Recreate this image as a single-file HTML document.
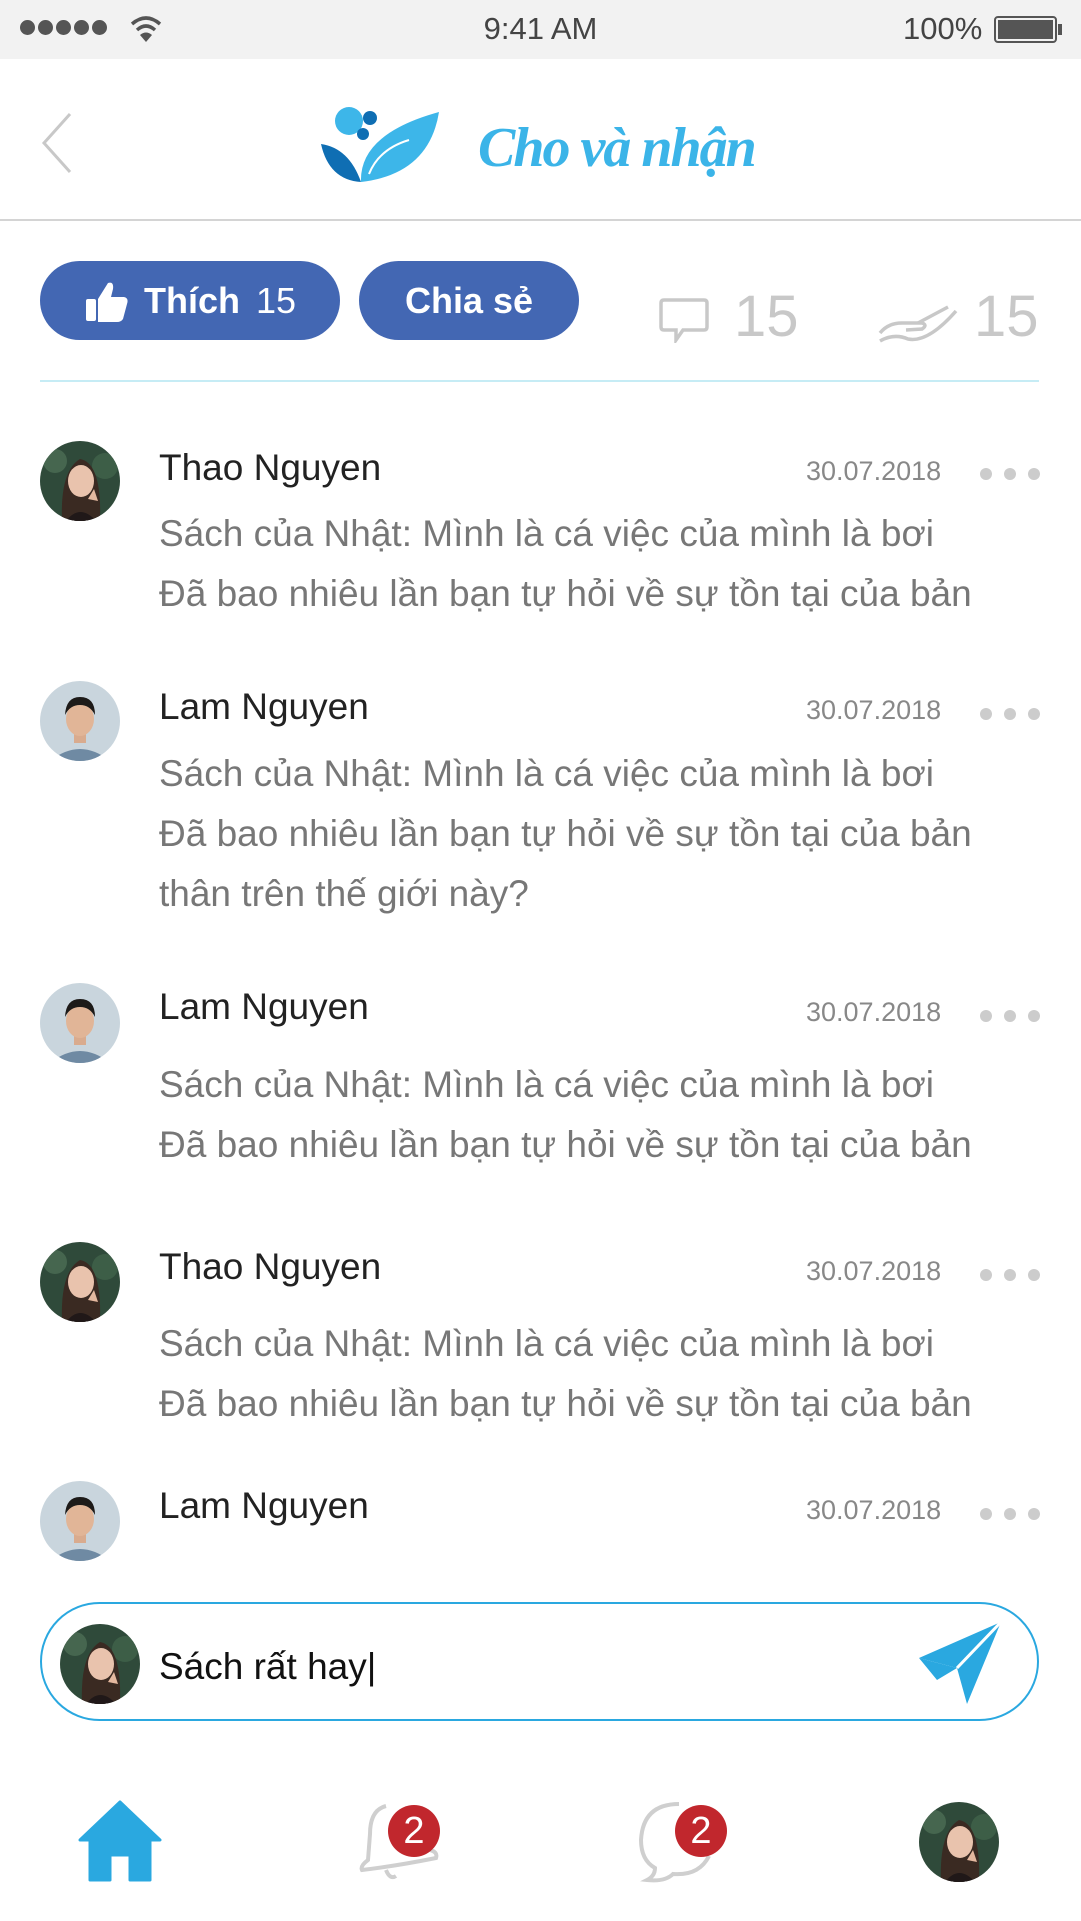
<!DOCTYPE html>
<html><head><meta charset="utf-8">
<style>
*{margin:0;padding:0;box-sizing:border-box}
body{width:1081px;height:1921px;background:#fff;font-family:"Liberation Sans",sans-serif;position:relative;overflow:hidden}
.abs{position:absolute}
.status{left:0;top:0;width:1081px;height:59px;background:#f2f2f2}
.name{font-size:37px;color:#222;left:159px}
.date{font-size:27px;color:#888;left:806px}
.txt{font-size:37px;color:#777;left:159px;white-space:nowrap}
.dots{left:980px;width:60px;height:12px}
.dots i{position:absolute;top:0;width:12px;height:12px;border-radius:50%;background:#ccc}
.btn{background:#4367b3;color:#fff;border-radius:40px;font-weight:bold;font-size:36px;display:flex;align-items:center;justify-content:center}
</style></head><body>
<svg width="0" height="0" style="position:absolute">
<defs>
<clipPath id="cc"><circle cx="40" cy="40" r="40"/></clipPath>
<g id="woman"><g clip-path="url(#cc)"><rect width="80" height="80" fill="#2f4a3a"/><circle cx="15" cy="20" r="12" fill="#46664f"/><circle cx="65" cy="25" r="13" fill="#3d5e47"/><path d="M22 80 Q20 30 40 18 Q62 22 60 80Z" fill="#3a2a22"/><ellipse cx="41" cy="40" rx="13" ry="16" fill="#e9c3ad"/><path d="M26 80 Q40 62 56 80Z" fill="#201818"/><path d="M48 58 l6 -10 4 12z" fill="#e4b89f"/></g></g>
<g id="man"><g clip-path="url(#cc)"><rect width="80" height="80" fill="#c9d5dd"/><path d="M10 80 Q40 56 70 80Z" fill="#6f8aa3"/><rect x="34" y="50" width="12" height="12" fill="#d9ab8e"/><ellipse cx="40" cy="38" rx="14" ry="17" fill="#e1b597"/><path d="M25 34 Q26 16 40 16 Q55 16 55 34 Q50 24 40 24 Q30 24 25 34Z" fill="#1d1a18"/></g></g>
</defs></svg>

<div class="abs status"></div>
<div class="abs" style="left:20px;top:20px;display:flex;gap:3px"><i style="width:15px;height:15px;border-radius:50%;background:#555;display:block"></i><i style="width:15px;height:15px;border-radius:50%;background:#555;display:block"></i><i style="width:15px;height:15px;border-radius:50%;background:#555;display:block"></i><i style="width:15px;height:15px;border-radius:50%;background:#555;display:block"></i><i style="width:15px;height:15px;border-radius:50%;background:#555;display:block"></i></div>
<svg class="abs" style="left:130px;top:14px" width="32" height="30" viewBox="0 0 32 30"><path d="M2 10 Q16 -2 30 10" stroke="#555" stroke-width="3.5" fill="none"/><path d="M7 16 Q16 8 25 16" stroke="#555" stroke-width="3.5" fill="none"/><path d="M16 28 L10 21 Q16 16 22 21Z" fill="#555"/></svg>
<div class="abs" style="left:0;width:1081px;top:11px;text-align:center;font-size:31px;color:#444">9:41 AM</div>
<div class="abs" style="left:903px;top:11px;font-size:31px;color:#444">100%</div>
<div class="abs" style="left:994px;top:16px;width:63px;height:27px;border:2px solid #555;border-radius:4px;padding:2px"><div style="background:#555;width:100%;height:100%"></div></div>
<div class="abs" style="left:1058px;top:24px;width:4px;height:11px;background:#555"></div>

<svg class="abs" style="left:38px;top:112px" width="36" height="62"><path d="M32 2 L6 31 L32 60" stroke="#c8c8c8" stroke-width="3" fill="none"/></svg>
<div class="abs" style="left:0;top:219px;width:1081px;height:2px;background:#d4d4d4"></div>

<svg class="abs" style="left:319px;top:104px" width="122" height="80" viewBox="0 0 122 80">
<circle cx="30" cy="17" r="14" fill="#3db6e9"/><circle cx="51" cy="14" r="7" fill="#0f6eb3"/><circle cx="44" cy="30" r="6" fill="#0f6eb3"/>
<path d="M2 40 Q30 44 42 78 Q10 76 2 40Z" fill="#0f6eb3"/>
<path d="M42 78 Q40 30 120 8 Q110 70 42 78Z" fill="#3db6e9"/>
<path d="M50 70 Q60 45 90 36" stroke="#fff" stroke-width="2" fill="none"/>
</svg>
<div class="abs" style="left:478px;top:116px;font-family:'Liberation Serif',serif;font-style:italic;font-weight:bold;font-size:56px;color:#3bb4e8;letter-spacing:-2px">Cho và nhận</div>

<div class="abs btn" style="left:40px;top:261px;width:300px;height:79px">
<svg width="46" height="44" viewBox="0 0 46 44" style="margin-right:14px"><rect x="2" y="20" width="10" height="22" rx="2" fill="#fff"/><path d="M14 20 L24 4 Q30 2 29 10 L27 18 L40 18 Q45 19 43 25 L39 40 Q37 43 33 43 L14 43Z" fill="#fff"/></svg>
Thích<span style="font-weight:normal;margin-left:16px">15</span></div>
<div class="abs btn" style="left:359px;top:261px;width:220px;height:79px">Chia sẻ</div>
<svg class="abs" style="left:659px;top:297px" width="50" height="46" viewBox="0 0 50 46"><path d="M5 3 H45 Q48 3 48 6 V30 Q48 33 45 33 H24 L17 43 L17 33 H5 Q2 33 2 30 V6 Q2 3 5 3Z" stroke="#c8c8c8" stroke-width="3.5" fill="none"/></svg>
<div class="abs" style="left:734px;top:283px;font-size:58px;color:#c8c8c8">15</div>
<svg class="abs" style="left:878px;top:303px" width="82" height="42" viewBox="0 0 82 42"><path d="M2 30 Q10 20 24 20 L44 20 Q50 22 44 26 L28 27 M2 38 Q16 30 30 36 Q50 40 78 8" stroke="#c8c8c8" stroke-width="3.5" fill="none"/><path d="M40 20 L70 4" stroke="#c8c8c8" stroke-width="3.5"/></svg>
<div class="abs" style="left:974px;top:283px;font-size:58px;color:#c8c8c8">15</div>
<div class="abs" style="left:40px;top:380px;width:999px;height:2px;background:#c6ecf5"></div>

<svg class="abs" style="left:40px;top:441px" width="80" height="80"><use href="#woman"/></svg>
<div class="abs name" style="top:447px">Thao Nguyen</div>
<div class="abs date" style="top:456px">30.07.2018</div>
<div class="abs dots" style="top:468px"><i style="left:0"></i><i style="left:24px"></i><i style="left:48px"></i></div>
<div class="abs txt" style="top:513px">Sách của Nhật: Mình là cá việc của mình là bơi</div>
<div class="abs txt" style="top:573px">Đã bao nhiêu lần bạn tự hỏi về sự tồn tại của bản</div>

<svg class="abs" style="left:40px;top:681px" width="80" height="80"><use href="#man"/></svg>
<div class="abs name" style="top:686px">Lam Nguyen</div>
<div class="abs date" style="top:695px">30.07.2018</div>
<div class="abs dots" style="top:708px"><i style="left:0"></i><i style="left:24px"></i><i style="left:48px"></i></div>
<div class="abs txt" style="top:753px">Sách của Nhật: Mình là cá việc của mình là bơi</div>
<div class="abs txt" style="top:813px">Đã bao nhiêu lần bạn tự hỏi về sự tồn tại của bản</div>
<div class="abs txt" style="top:873px">thân trên thế giới này?</div>

<svg class="abs" style="left:40px;top:983px" width="80" height="80"><use href="#man"/></svg>
<div class="abs name" style="top:986px">Lam Nguyen</div>
<div class="abs date" style="top:997px">30.07.2018</div>
<div class="abs dots" style="top:1010px"><i style="left:0"></i><i style="left:24px"></i><i style="left:48px"></i></div>
<div class="abs txt" style="top:1064px">Sách của Nhật: Mình là cá việc của mình là bơi</div>
<div class="abs txt" style="top:1124px">Đã bao nhiêu lần bạn tự hỏi về sự tồn tại của bản</div>

<svg class="abs" style="left:40px;top:1242px" width="80" height="80"><use href="#woman"/></svg>
<div class="abs name" style="top:1246px">Thao Nguyen</div>
<div class="abs date" style="top:1256px">30.07.2018</div>
<div class="abs dots" style="top:1269px"><i style="left:0"></i><i style="left:24px"></i><i style="left:48px"></i></div>
<div class="abs txt" style="top:1323px">Sách của Nhật: Mình là cá việc của mình là bơi</div>
<div class="abs txt" style="top:1383px">Đã bao nhiêu lần bạn tự hỏi về sự tồn tại của bản</div>

<svg class="abs" style="left:40px;top:1481px" width="80" height="80"><use href="#man"/></svg>
<div class="abs name" style="top:1485px">Lam Nguyen</div>
<div class="abs date" style="top:1495px">30.07.2018</div>
<div class="abs dots" style="top:1508px"><i style="left:0"></i><i style="left:24px"></i><i style="left:48px"></i></div>

<div class="abs" style="left:40px;top:1602px;width:999px;height:119px;border:2.5px solid #2aa8e0;border-radius:60px"></div>
<svg class="abs" style="left:60px;top:1624px" width="80" height="80"><use href="#woman"/></svg>
<div class="abs" style="left:159px;top:1646px;font-size:37px;color:#111">Sách rất hay|</div>
<svg class="abs" style="left:917px;top:1620px" width="88" height="86" viewBox="0 0 88 86"><path d="M2 38 L84 2 L50 84 L40 48 Z" fill="#2aa8e0"/><path d="M84 2 L40 48" stroke="#fff" stroke-width="3"/><path d="M2 38 L40 48 L20 60Z" fill="#2aa8e0"/></svg>

<svg class="abs" style="left:78px;top:1800px" width="84" height="82" viewBox="0 0 84 82"><path d="M42 2 L82 40 L72 40 L72 80 L52 80 L52 55 L32 55 L32 80 L12 80 L12 40 L2 40Z" fill="#2aa8e0" stroke="#2aa8e0" stroke-linejoin="round" stroke-width="3"/></svg>
<svg class="abs" style="left:356px;top:1800px" width="90" height="84" viewBox="0 0 90 84"><path d="M30 6 Q14 10 14 34 L12 60 Q4 66 6 70 Q40 66 80 58 Q82 52 74 50 L64 26" stroke="#cfcfcf" stroke-width="4" fill="none"/><path d="M30 70 Q34 80 40 76" stroke="#cfcfcf" stroke-width="4" fill="none"/></svg>
<div class="abs" style="left:388px;top:1805px;width:52px;height:52px;border-radius:50%;background:#c1272d;color:#fff;font-size:38px;text-align:center;line-height:52px">2</div>
<svg class="abs" style="left:635px;top:1800px" width="84" height="84" viewBox="0 0 84 84"><path d="M44 4 Q8 4 6 40 Q6 60 20 68 Q20 76 12 80 Q30 82 38 74 Q64 76 74 56" stroke="#cfcfcf" stroke-width="4" fill="none"/></svg>
<div class="abs" style="left:675px;top:1805px;width:52px;height:52px;border-radius:50%;background:#c1272d;color:#fff;font-size:38px;text-align:center;line-height:52px">2</div>
<svg class="abs" style="left:919px;top:1802px" width="80" height="80"><use href="#woman"/></svg>
</body></html>
